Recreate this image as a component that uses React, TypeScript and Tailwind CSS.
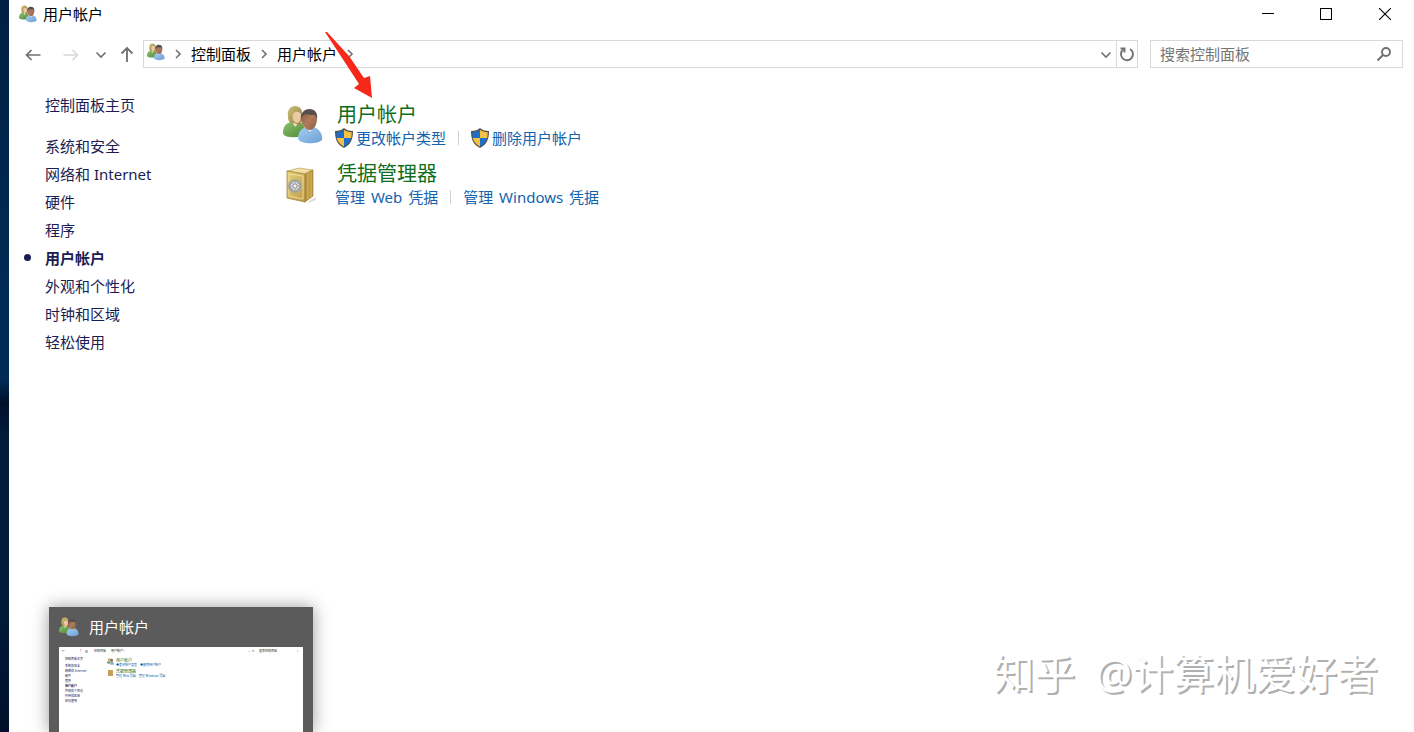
import React, { useState } from 'react'

type SidebarItem = { label: string; active?: boolean }

const sidebarItems: SidebarItem[] = [
  { label: '系统和安全' },
  { label: '网络和 Internet' },
  { label: '硬件' },
  { label: '程序' },
  { label: '用户帐户', active: true },
  { label: '外观和个性化' },
  { label: '时钟和区域' },
  { label: '轻松使用' },
]

function UsersIcon({ className }: { className: string }) {
  return (
    <svg viewBox="0 0 40 40" className={className} aria-hidden="true">
      <defs>
        <linearGradient id="green" x1="0" y1="0" x2="1" y2="1">
          <stop offset="0" stopColor="#8cc26a" />
          <stop offset="1" stopColor="#4f8a3a" />
        </linearGradient>
        <linearGradient id="blue" x1="0" y1="0" x2="1" y2="1">
          <stop offset="0" stopColor="#a5cdf0" />
          <stop offset="1" stopColor="#6c9fd6" />
        </linearGradient>
        <linearGradient id="hair" x1="0" y1="0" x2="1" y2="1">
          <stop offset="0" stopColor="#cfc07a" />
          <stop offset="1" stopColor="#94803f" />
        </linearGradient>
        <linearGradient id="skin" x1="0" y1="0" x2="1" y2="1">
          <stop offset="0" stopColor="#7d5644" />
          <stop offset="0.5" stopColor="#b07c5c" />
          <stop offset="1" stopColor="#8b5d44" />
        </linearGradient>
      </defs>
      <path d="M0 27c0-5 3-9 8-10l10 1c3 2 4 6 4 12-6 3-18 3-21 0-1-1-1-2-1-3z" fill="url(#green)" />
      <path d="M9 17l3 5 4-4-1-3H9z" fill="#f0d8bd" />
      <path d="M5 12C4 5 7 1 12 1c5 0 8 4 7 9 0 4-1 7-2 9-2 1-4 0-5-1-4 1-7-1-7-6z" fill="url(#hair)" />
      <path d="M10 9c2-3 6-3 8 0 0 5-1 9-4 9s-5-4-4-9z" fill="#ecc9a6" />
      <path d="M15 34c0-7 3-10 8-12h8c5 2 9 7 8 13-4 4-20 5-24-1z" fill="url(#blue)" />
      <path d="M23 22l4 5 4-5-1-3h-6z" fill="#e8f1fa" />
      <path d="M18 14c0-5 3-9 8-9s8 4 8 9-3 11-7 11-9-5-9-11z" fill="url(#skin)" />
      <path d="M18 14c-1-6 4-10 8-10 6 0 9 4 8 10l-2-4c-3 0-6 0-9-1-3 1-4 2-5 5z" fill="#584c4c" />
    </svg>
  )
}

function SafeIcon() {
  return (
    <svg viewBox="0 0 40 40" className="mt-[5px] h-10 w-10 shrink-0" aria-hidden="true">
      <defs>
        <linearGradient id="gold" x1="0" y1="0" x2="1" y2="1">
          <stop offset="0" stopColor="#e6cf7d" />
          <stop offset="1" stopColor="#bd9b45" />
        </linearGradient>
      </defs>
      <path d="M26 35l7-4v3l-8 3z" fill="#ddd" />
      <path d="M4 5l12-3 14 2-8 4z" fill="#f0dfa0" stroke="#b39a52" strokeWidth=".6" />
      <path d="M22 8l8-4v26l-8 6z" fill="#b8943c" stroke="#987a33" strokeWidth=".6" />
      <path d="M25 7v26M28 6v25" stroke="#e4c977" strokeWidth=".8" />
      <path d="M4 5l18 3v28L4 32z" fill="url(#gold)" stroke="#a3853a" strokeWidth=".8" />
      <path d="M6 8l14 2v23L6 30z" fill="none" stroke="#f2e3ab" strokeWidth=".8" />
      <circle cx="12" cy="20" r="7" fill="#aba996" />
      <circle cx="12" cy="20" r="5" fill="#d9dcdd" stroke="#85888a" strokeWidth=".8" />
      <path d="M12 16v8M8 20h8M9 17l6 6M15 17l-6 6" stroke="#8a9093" strokeWidth=".8" />
      <circle cx="12" cy="20" r="2" fill="#f6f6f6" stroke="#777" strokeWidth=".6" />
    </svg>
  )
}

function ShieldIcon() {
  return (
    <svg viewBox="0 0 18 20" className="h-5 w-[18px] shrink-0" aria-hidden="true">
      <path d="M9 0c2 1.800 5 2.900 9 3 0 8-2 13.500-9 17C2 16.500 0 11 0 3c4-.1 7-1.200 9-3z" fill="#55534c" />
      <path d="M9 2v8H1.800C1.400 8.200 1.300 6.400 1.300 4.200 4.300 4 7 3.300 9 2z" fill="#1f6fc8" />
      <path d="M9 2c2 1.300 4.700 2 7.700 2.200 0 2.200-.1 4-.5 5.800H9z" fill="#f6c244" />
      <path d="M1.800 10H9v8.500C4.900 16.200 2.600 13.600 1.800 10z" fill="#f6c244" />
      <path d="M16.200 10H9v8.500c4.100-2.300 6.400-4.900 7.200-8.500z" fill="#1f6fc8" />
    </svg>
  )
}

function Chevron({ down = false }: { down?: boolean }) {
  return (
    <svg viewBox="0 0 12 12" className="h-3 w-3 shrink-0" fill="none" stroke="#707070" strokeWidth="1.600" aria-hidden="true">
      <path d={down ? 'M1.500 4.500L6 9l4.500-4.500' : 'M4 2l4 4-4 4'} />
    </svg>
  )
}

function TitleBar() {
  return (
    <header className="flex h-7 items-center pl-2.5">
      <UsersIcon className="h-[18px] w-[18px]" />
      <h1 className="ml-1.5 flex-1">用户帐户</h1>
      <button aria-label="最小化" className="flex h-7 w-[58px] items-center justify-center">
        <svg viewBox="0 0 12 12" className="h-3 w-3" stroke="#000" shapeRendering="crispEdges">
          <path d="M0 5.500h12" />
        </svg>
      </button>
      <button aria-label="最大化" className="flex h-7 w-[58px] items-center justify-center">
        <svg viewBox="0 0 12 12" className="h-3 w-3" fill="none" stroke="#000" shapeRendering="crispEdges">
          <path d="M.5.5h11v11H.5z" />
        </svg>
      </button>
      <button aria-label="关闭" className="flex h-7 w-[59px] items-center justify-center">
        <svg viewBox="0 0 12 12" className="h-3 w-3" fill="none" stroke="#000" strokeWidth="1.100">
          <path d="M0 0l12 12M12 0L0 12" />
        </svg>
      </button>
    </header>
  )
}

function Toolbar() {
  const [query, setQuery] = useState('')

  return (
    <div className="mt-3 flex h-7 items-center pr-[11px] pl-3.5">
      <button aria-label="后退" className="flex h-7 w-5 items-center justify-center">
        <svg viewBox="0 0 16 16" className="h-4 w-4" fill="none" stroke="#707070" strokeWidth="1.700">
          <path d="M15.500 9H1.500M6.500 4L1.500 9l5 5" />
        </svg>
      </button>
      <button aria-label="前进" className="ml-[18px] flex h-7 w-5 items-center justify-center" disabled>
        <svg viewBox="0 0 16 16" className="h-4 w-4" fill="none" stroke="#d8d8d8" strokeWidth="1.600">
          <path d="M.5 9h14M9.500 4l5 5-5 5" />
        </svg>
      </button>
      <button aria-label="最近浏览的位置" className="ml-3.5 flex h-7 w-3 items-center justify-center">
        <Chevron down />
      </button>
      <button aria-label="上移" className="ml-3 flex h-7 w-4 items-center justify-center">
        <svg viewBox="0 0 16 16" className="h-4 w-4" fill="none" stroke="#707070" strokeWidth="1.800">
          <path d="M8 16V2M2.500 7.500L8 2l5.500 5.500" />
        </svg>
      </button>

      <nav aria-label="地址" className="ml-2 flex h-7 min-w-0 flex-1 items-center border border-[#d9d9d9]">
        <UsersIcon className="mb-1 ml-[3px] h-[18px] w-[18px] shrink-0" />
        <span className="ml-[7px] flex items-center gap-[7px]">
          <Chevron />
          <a href="#panel" className="leading-6">控制面板</a>
          <Chevron />
          <a href="#accounts" className="leading-6">用户帐户</a>
          <Chevron />
        </span>
        <button aria-label="以前的位置" className="ml-auto flex h-full w-5 items-center justify-center">
          <Chevron down />
        </button>
        <button aria-label="刷新" className="flex h-full w-[21px] items-center justify-center border-l border-[#d9d9d9]">
          <svg viewBox="0 0 16 16" className="h-4 w-4" fill="none" stroke="#707070" strokeWidth="1.900">
            <path d="M11 3a6 6 0 1 1-6.500.3" />
            <path d="M1.500 2.500h4v4" />
          </svg>
        </button>
      </nav>

      <div className="ml-3 flex h-7 w-[253px] shrink-0 items-center border border-[#d9d9d9] pr-2.5 pl-[9px]">
        <input
          type="text"
          aria-label="搜索控制面板"
          value={query}
          onChange={(e) => setQuery(e.target.value)}
          placeholder="搜索控制面板"
          className="h-[26px] min-w-0 flex-1 leading-[26px] outline-none placeholder:text-[#757575]"
        />
        <svg viewBox="0 0 16 16" className="h-4 w-4" fill="none" stroke="#707070" strokeWidth="1.900" aria-hidden="true">
          <circle cx="10" cy="6" r="4" />
          <path d="M7 9l-5.500 5.500" />
        </svg>
      </div>
    </div>
  )
}

function Sidebar() {
  return (
    <nav aria-label="类别" className="w-[274px] shrink-0 pl-9 leading-7 text-[#1a1c52]">
      <a href="#home">控制面板主页</a>
      <ul className="mt-[13px]">
        {sidebarItems.map((item) => (
          <li key={item.label} className="relative">
            {item.active && <span className="absolute top-2.5 -left-[21px] h-[7px] w-[7px] rounded-full bg-[#1a1c52]" />}
            <a href="#category" className={item.active ? 'font-bold' : ''}>
              {item.label}
            </a>
          </li>
        ))}
      </ul>
    </nav>
  )
}

function Divider() {
  return <span className="mx-3 h-3.5 w-px bg-[#d0d0d0]" />
}

function Categories() {
  return (
    <main className="flex flex-1 flex-col gap-[13px] pt-[11px] text-[#1263ad]">
      <section className="flex items-start gap-3">
        <UsersIcon className="mt-[3px] h-10 w-10 shrink-0" />
        <div>
          <h2 className="pl-0.5 text-[20px] leading-[26px] text-[#0f6e1a]">
            <a href="#accounts">用户帐户</a>
          </h2>
          <div className="flex h-5 items-center">
            <a href="#type" className="flex items-center gap-[3px]">
              <ShieldIcon />
              更改帐户类型
            </a>
            <Divider />
            <a href="#remove" className="flex items-center gap-[3px]">
              <ShieldIcon />
              删除用户帐户
            </a>
          </div>
        </div>
      </section>
      <section className="flex h-[46px] items-start gap-3">
        <SafeIcon />
        <div>
          <h2 className="pl-0.5 text-[20px] leading-[26px] text-[#0f6e1a]">
            <a href="#credentials">凭据管理器</a>
          </h2>
          <div className="flex h-5 items-center">
            <a href="#web">
              管理 <span className="mx-0.5">Web</span> 凭据
            </a>
            <Divider />
            <a href="#windows">
              管理 <span className="mx-0.5">Windows</span> 凭据
            </a>
          </div>
        </div>
      </section>
    </main>
  )
}

// Taskbar hover preview, a tiny copy of the window
function TaskbarPreview() {
  return (
    <aside className="absolute bottom-0 left-[49px] h-[125px] w-[264px] bg-[#5b5b5b] px-2.5 shadow-[0_0_16px_rgba(0,0,0,0.4)]">
      <div className="flex h-10 items-center text-white">
        <UsersIcon className="h-5 w-5" />
        <span className="ml-2.5">用户帐户</span>
      </div>
      <div className="h-[85px] bg-white text-[3px] leading-[5px] text-[#333]" aria-hidden="true">
        <div className="flex h-2 items-center pr-1 pl-[3px]">
          <span>←</span>
          <span className="ml-3.5">↑</span>
          <UsersIcon className="ml-[3px] h-[3px] w-[3px]" />
          <span className="ml-1.5">控制面板</span>
          <span className="ml-[5px]">用户帐户 ›</span>
          <span className="ml-auto">⌄ ↻</span>
          <span className="mr-5 ml-1">搜索控制面板</span>
          <span>⌕</span>
        </div>
        <div className="flex pt-0.5 pl-1.5">
          <div className="w-[42px] text-[#14164f]">
            <div className="mb-0.5">控制面板主页</div>
            {sidebarItems.map((item) => (
              <div key={item.label} className={item.active ? 'font-bold' : ''}>
                {item.label}
              </div>
            ))}
          </div>
          <div className="flex flex-col gap-px pt-px text-[#0a5fa8]">
            <div className="flex gap-0.5">
              <UsersIcon className="h-[7px] w-[7px]" />
              <div>
                <div className="text-[4px] text-[#0c6b16]">用户帐户</div>
                <div>◆更改帐户类型　◆删除用户帐户</div>
              </div>
            </div>
            <div className="flex gap-0.5">
              <div className="m-px h-[6px] w-[5px] bg-[#c6a052]" />
              <div>
                <div className="text-[4px] text-[#0c6b16]">凭据管理器</div>
                <div>管理 Web 凭据　管理 Windows 凭据</div>
              </div>
            </div>
          </div>
        </div>
      </div>
    </aside>
  )
}

function App() {
  return (
    <div className="relative flex min-h-screen overflow-hidden bg-white font-['Noto_Sans','Noto_Sans_CJK_SC',sans-serif] text-[15px] leading-5 text-black">
      <div className="w-[9px] shrink-0 bg-[linear-gradient(#001f42,#002b55_40%,#002b55_52%,#00102b_55%,#001c3a_60%,#001c3a_80%,#00102b)]" />
      <div className="min-w-0 flex-1">
        <TitleBar />
        <Toolbar />
        <div className="flex pt-[23px]">
          <Sidebar />
          <Categories />
        </div>
      </div>

      <svg viewBox="0 0 50 70" className="pointer-events-none absolute top-[30px] left-[324px] h-[70px] w-[50px]" aria-hidden="true">
        <path d="M1 2h2l22 24 15 22 6-2 2 22-18-10 5-4-13-20z" fill="#f5281a" />
      </svg>

      <TaskbarPreview />
      <div className="absolute right-9 bottom-[30px] flex gap-5 text-[41px] leading-[58px] text-white [text-shadow:2px_2px_0_#b0b0b0]">
        <span>知乎</span>
        <span>@计算机爱好者</span>
      </div>
    </div>
  )
}

export default App
